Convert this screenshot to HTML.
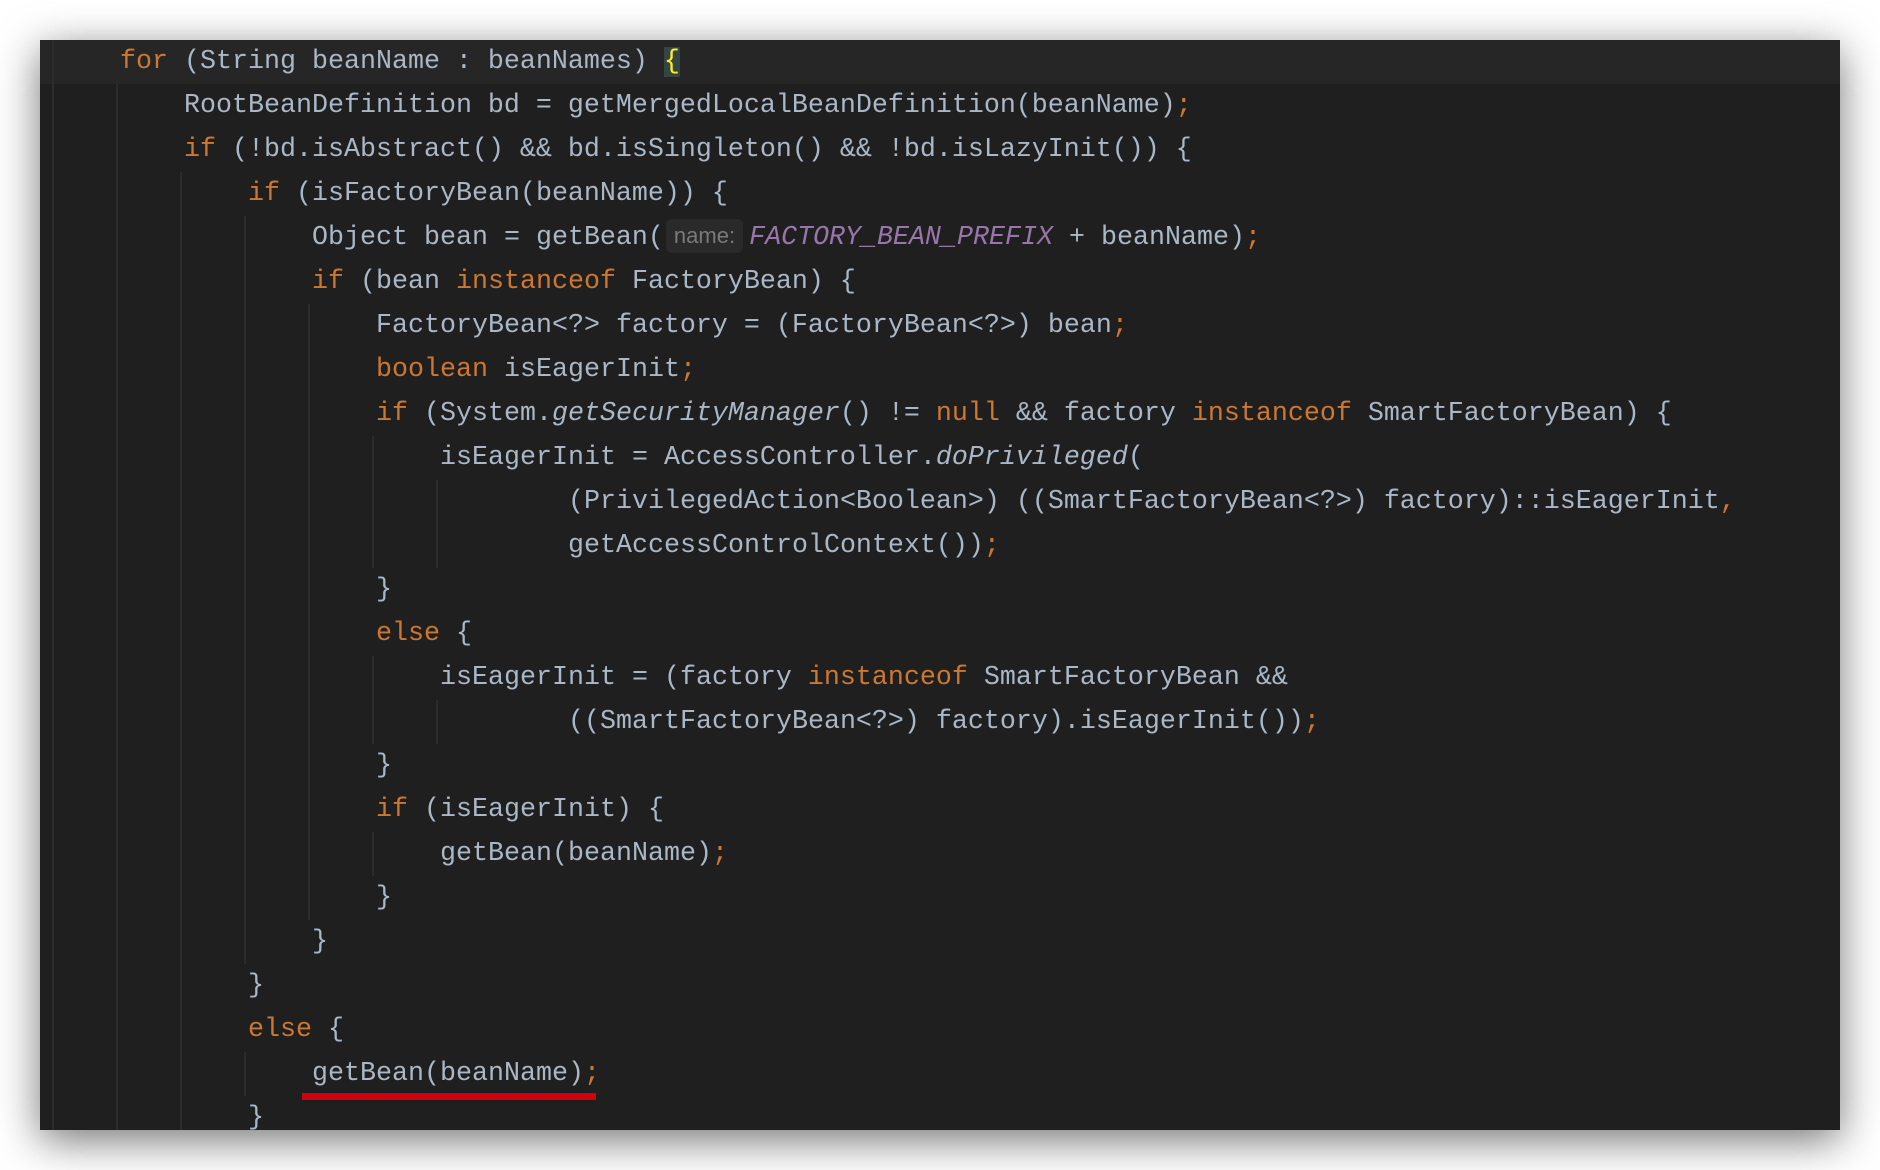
<!DOCTYPE html>
<html><head><meta charset="utf-8"><style>
html,body{margin:0;padding:0;background:#fff;width:1880px;height:1170px;overflow:hidden}
#p{position:absolute;left:40px;top:40px;width:1800px;height:1090px;background:#1f1f1f;box-shadow:0 10px 40px rgba(0,0,0,.55);overflow:hidden}
.l{position:absolute;left:0;height:44px;line-height:44px;white-space:pre;font-family:"Liberation Mono",monospace;font-size:26.67px;color:#a9b7c6}
.k{color:#cc7832}.pu{color:#9876aa;font-style:italic}.i{font-style:italic}
.g{position:absolute;width:2px;background:#2c2c2c}
.h{display:inline-block;font-family:"Liberation Sans",sans-serif;font-size:22px;color:#7a7a7a;background:#2a2a2a;border-radius:6px;line-height:34px;padding:0 8px;margin:0 6px 0 2px;vertical-align:1px}
.br{color:#ffef28;background:#34463f}
</style></head><body>
<div id="p">
<div style="position:absolute;left:0;top:0;width:1800px;height:44px;background:#262626"></div>
<div class="g" style="left:12px;top:0;height:1090px"></div>
<div class="g" style="left:76px;top:44px;height:1046px"></div>
<div class="g" style="left:140px;top:132px;height:958px"></div>
<div class="g" style="left:204px;top:176px;height:748px"></div>
<div class="g" style="left:204px;top:1012px;height:44px"></div>
<div class="g" style="left:268px;top:264px;height:616px"></div>
<div class="g" style="left:332px;top:396px;height:132px"></div>
<div class="g" style="left:332px;top:616px;height:88px"></div>
<div class="g" style="left:332px;top:792px;height:44px"></div>
<div class="g" style="left:396px;top:440px;height:88px"></div>
<div class="g" style="left:396px;top:660px;height:44px"></div>
<div style="position:absolute;left:262px;top:1053px;width:294px;height:7px;background:#d0000f"></div>
</div>
<div style="position:absolute;left:0;top:0">
<div class="l" style="top:40px;left:120px"><span class="k">for</span> (String beanName : beanNames) <span class="br">{</span></div>
<div class="l" style="top:84px;left:184px">RootBeanDefinition bd = getMergedLocalBeanDefinition(beanName)<span class="k">;</span></div>
<div class="l" style="top:128px;left:184px"><span class="k">if</span> (!bd.isAbstract() &amp;&amp; bd.isSingleton() &amp;&amp; !bd.isLazyInit()) {</div>
<div class="l" style="top:172px;left:248px"><span class="k">if</span> (isFactoryBean(beanName)) {</div>
<div class="l" style="top:216px;left:312px">Object bean = getBean(<span class="h">name:</span><span class="pu">FACTORY_BEAN_PREFIX</span> + beanName)<span class="k">;</span></div>
<div class="l" style="top:260px;left:312px"><span class="k">if</span> (bean <span class="k">instanceof</span> FactoryBean) {</div>
<div class="l" style="top:304px;left:376px">FactoryBean&lt;?&gt; factory = (FactoryBean&lt;?&gt;) bean<span class="k">;</span></div>
<div class="l" style="top:348px;left:376px"><span class="k">boolean</span> isEagerInit<span class="k">;</span></div>
<div class="l" style="top:392px;left:376px"><span class="k">if</span> (System.<span class="i">getSecurityManager</span>() != <span class="k">null</span> &amp;&amp; factory <span class="k">instanceof</span> SmartFactoryBean) {</div>
<div class="l" style="top:436px;left:440px">isEagerInit = AccessController.<span class="i">doPrivileged</span>(</div>
<div class="l" style="top:480px;left:568px">(PrivilegedAction&lt;Boolean&gt;) ((SmartFactoryBean&lt;?&gt;) factory)::isEagerInit<span class="k">,</span></div>
<div class="l" style="top:524px;left:568px">getAccessControlContext())<span class="k">;</span></div>
<div class="l" style="top:568px;left:376px">}</div>
<div class="l" style="top:612px;left:376px"><span class="k">else</span> {</div>
<div class="l" style="top:656px;left:440px">isEagerInit = (factory <span class="k">instanceof</span> SmartFactoryBean &amp;&amp;</div>
<div class="l" style="top:700px;left:568px">((SmartFactoryBean&lt;?&gt;) factory).isEagerInit())<span class="k">;</span></div>
<div class="l" style="top:744px;left:376px">}</div>
<div class="l" style="top:788px;left:376px"><span class="k">if</span> (isEagerInit) {</div>
<div class="l" style="top:832px;left:440px">getBean(beanName)<span class="k">;</span></div>
<div class="l" style="top:876px;left:376px">}</div>
<div class="l" style="top:920px;left:312px">}</div>
<div class="l" style="top:964px;left:248px">}</div>
<div class="l" style="top:1008px;left:248px"><span class="k">else</span> {</div>
<div class="l" style="top:1052px;left:312px">getBean(beanName)<span class="k">;</span></div>
<div class="l" style="top:1096px;left:248px;height:34px;overflow:hidden">}</div>
</div>
</body></html>
